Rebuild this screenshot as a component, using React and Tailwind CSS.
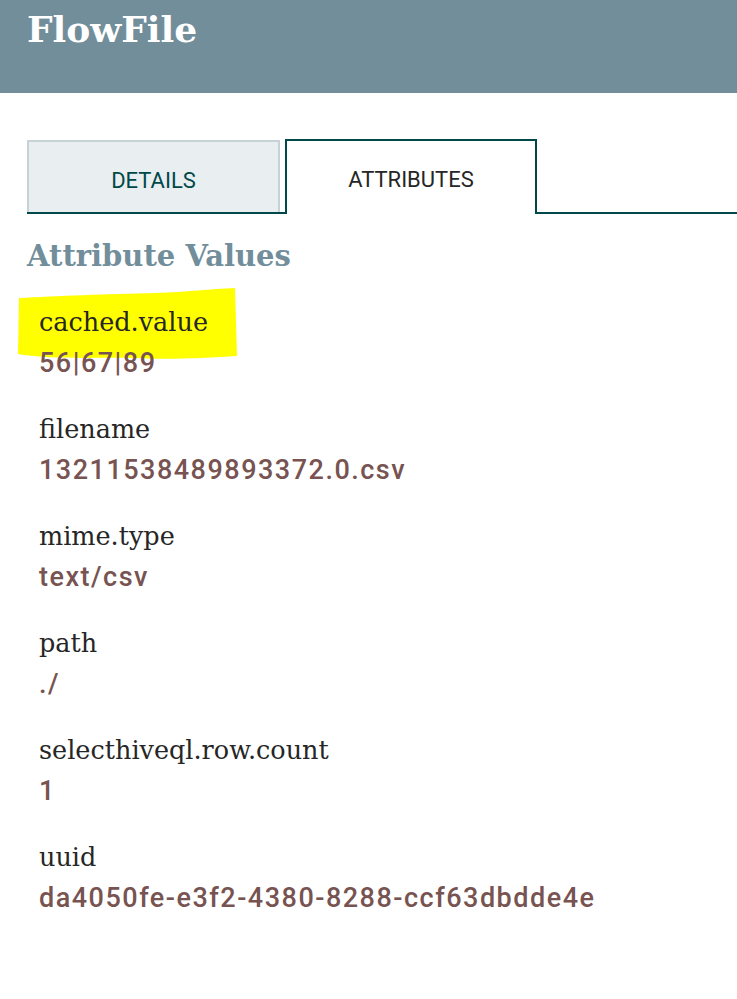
import React from 'react'

const attrs = [
  { name: 'cached.value', value: '56|67|89' },
  { name: 'filename', value: '13211538489893372.0.csv' },
  { name: 'mime.type', value: 'text/csv' },
  { name: 'path', value: './' },
  { name: 'selecthiveql.row.count', value: '1' },
  { name: 'uuid', value: 'da4050fe-e3f2-4380-8288-ccf63dbdde4e' },
]

const slab = { fontFamily: '"DejaVu Serif", "Liberation Serif", serif' }

const App = () => {
  return (
    <div className="w-[737px] h-[999px] bg-white overflow-hidden">
      {/* header */}
      <div className="h-[93px] bg-[#728e9b] px-[27px] pt-[5px]">
        <h1 className="text-white font-bold text-[36px] leading-[48px]" style={slab}>FlowFile</h1>
      </div>

      {/* tabs */}
      <div className="ml-[27px] mt-[47px] flex items-end border-b-2 border-[#004849] h-[74px]" style={{ fontFamily: 'Roboto, sans-serif' }}>
        <div className="w-[253px] h-[72px] pt-[6px] bg-[#e9eef0] border-2 border-b-0 border-[#c7d2d7] flex items-center justify-center text-[22px] text-[#004849]">
          DETAILS
        </div>
        <div className="ml-[5px] w-[252px] h-[75px] pt-[4px] -mb-[2px] bg-white border-2 border-b-0 border-[#004849] flex items-center justify-center text-[22px] text-[#262626]">
          ATTRIBUTES
        </div>
      </div>

      {/* attribute list */}
      <div className="px-[27px] pt-[20px]">
        <h2 className="text-[#728e9b] font-bold text-[29px] leading-[44px]" style={slab}>Attribute Values</h2>
        <div className="relative mt-[24px] pl-[12px]">
          {/* highlighter mark */}
          <svg className="absolute left-[-11px] top-[-14px]" width="224" height="76" viewBox="0 0 224 76">
            <path d="M3 10 C40 8 90 6 140 5 C170 4 195 1 219 0 L221 68 C190 70 150 72 120 70 C80 69 40 72 2 66 Z" fill="#ffff00" />
          </svg>
          {attrs.map((a) => (
            <div key={a.name} className="relative mb-[25px]">
              <div className="text-[25.5px] leading-[40px] text-[#262626]" style={slab}>{a.name}</div>
              <div className="text-[27px] leading-[42px] font-medium text-[#775351] tracking-[1.5px]" style={{ fontFamily: 'Roboto, sans-serif' }}>{a.value}</div>
            </div>
          ))}
        </div>
      </div>
    </div>
  )
}

export default App
